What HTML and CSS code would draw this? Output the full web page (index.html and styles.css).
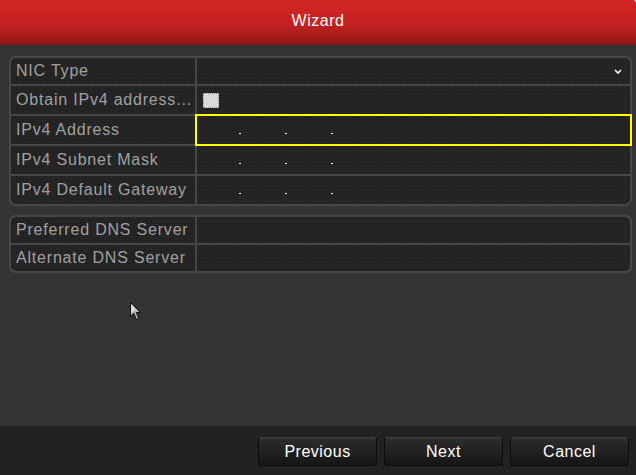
FILE: index.html
```html
<!DOCTYPE html>
<html lang="en">
<head>
    <meta charset="UTF-8">
    <title>Wizard</title>
    <link rel="stylesheet" href="styles.css">
</head>
<body>
    <div class="wizard">
        <header class="title-bar">Wizard</header>

        <main class="content">
            <div class="group">
                <div class="row">
                    <div class="label">NIC Type</div>
                    <div class="value select">
                        <svg class="chevron" width="8" height="6" viewBox="0 0 8 6">
                            <path d="M1 1 L4 4 L7 1" fill="none" stroke="#fff" stroke-width="1.6"/>
                        </svg>
                    </div>
                </div>
                <div class="row">
                    <div class="label">Obtain IPv4 address...</div>
                    <div class="value"><span class="checkbox"></span></div>
                </div>
                <div class="row">
                    <div class="label">IPv4 Address</div>
                    <div class="value ip focused"><span class="dot"></span><span class="dot"></span><span class="dot"></span></div>
                </div>
                <div class="row">
                    <div class="label">IPv4 Subnet Mask</div>
                    <div class="value ip"><span class="dot"></span><span class="dot"></span><span class="dot"></span></div>
                </div>
                <div class="row">
                    <div class="label">IPv4 Default Gateway</div>
                    <div class="value ip"><span class="dot"></span><span class="dot"></span><span class="dot"></span></div>
                </div>
            </div>

            <div class="group dns">
                <div class="row">
                    <div class="label">Preferred DNS Server</div>
                    <div class="value"></div>
                </div>
                <div class="row">
                    <div class="label">Alternate DNS Server</div>
                    <div class="value"></div>
                </div>
            </div>

            <svg class="cursor" width="12" height="19" viewBox="0 0 12 19">
                <path d="M0.5 0.5 L0.5 14.5 L3.8 11.2 L6.5 17.5 L8.8 16.5 L6.2 10.5 L10.5 10.5 Z" fill="#b8b8b8" stroke="#111" stroke-width="1"/>
                <path d="M1.5 2.5 L1.5 11 L5 7.5 Z" fill="#e6e6e6"/>
            </svg>
        </main>

        <footer class="buttons">
            <button class="btn">Previous</button>
            <button class="btn">Next</button>
            <button class="btn">Cancel</button>
        </footer>
    </div>
</body>
</html>
```

FILE: styles.css
```css
html {
    background-color: #fff;
}
body {
    margin: 0;
    padding: 0;
    font-family: "Liberation Sans", Arial, sans-serif;
}
.wizard {
    width: 636px;
    height: 475px;
    display: flex;
    flex-direction: column;
    background-color: #333;
    border-top-right-radius: 4px;
    overflow: hidden;
}
.title-bar {
    height: 45px;
    flex: none;
    background: linear-gradient(#d22525 0%, #c82121 50%, #a91c1c 80%, #8a1717 100%);
    color: #fff;
    font-size: 16px;
    letter-spacing: 0.5px;
    text-align: center;
    line-height: 42px;
}
.content {
    position: relative;
    flex: 1;
    padding: 11px 4px 0 9px;
    display: flex;
    flex-direction: column;
    gap: 9px;
}
.group {
    display: flex;
    flex-direction: column;
    gap: 2px;
    background-color: #464646;
    border: 2px solid #464646;
    border-radius: 6px;
}
.row {
    display: flex;
    gap: 2px;
    height: 28px;
}
.group .row:first-child,
.dns .row {
    height: 26px;
}
.group .row:first-child .label {
    border-top-left-radius: 5px;
}
.group .row:first-child .value {
    border-top-right-radius: 5px;
}
.group .row:last-child .label {
    border-bottom-left-radius: 5px;
}
.group .row:last-child .value {
    border-bottom-right-radius: 5px;
}
.label,
.value {
    background-color: #232323;
    background-image: radial-gradient(rgba(255, 255, 255, 0.035) 0.8px, transparent 0.8px);
    background-size: 3px 3px;
}
.label {
    width: 179px;
    flex: none;
    padding-left: 5px;
    color: #a0a0a0;
    font-size: 16px;
    letter-spacing: 0.8px;
    display: flex;
    align-items: center;
    white-space: nowrap;
    overflow: hidden;
}
.value {
    flex: 1;
    display: flex;
    align-items: center;
    position: relative;
}
.select {
    justify-content: flex-end;
    padding-right: 8px;
}
.chevron {
    margin-top: 2px;
}
.checkbox {
    width: 14px;
    height: 13px;
    margin-left: 6px;
    background-color: #d9d9d9;
    border: 1px dotted #8a8a8a;
    border-radius: 1px;
}
.ip {
    padding-left: 42px;
    gap: 44px;
}
.dot {
    width: 2px;
    height: 1px;
    margin-top: 7px;
    background-color: #f2f2f2;
}
.focused {
    outline: 2px solid #ffff00;
}
.cursor {
    position: absolute;
    left: 130px;
    top: 257px;
}
.buttons {
    height: 49px;
    flex: none;
    background-color: #222;
    display: flex;
    justify-content: flex-end;
    align-items: flex-start;
    gap: 7px;
    padding: 11px 7px 0 0;
    box-sizing: border-box;
}
.btn {
    width: 119px;
    height: 29px;
    background: linear-gradient(#2c2c2c, #161616);
    border: 1px solid #0d0d0d;
    border-top-color: #3a3a3a;
    border-radius: 3px;
    box-shadow: inset 0 1px 0 rgba(255, 255, 255, 0.06);
    color: #fff;
    font-family: "Liberation Sans", Arial, sans-serif;
    font-size: 16px;
    letter-spacing: 0.5px;
    cursor: pointer;
}
```
